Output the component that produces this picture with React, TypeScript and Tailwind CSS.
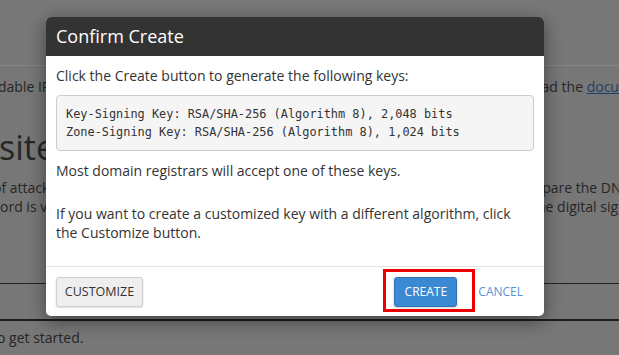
import React from 'react';

const sans = { fontFamily: '"Open Sans", "Liberation Sans", sans-serif' };

function Backdrop() {
  return (
    <div className="h-[355px] w-[619px] overflow-hidden bg-[#777777] text-[14px] text-[#262626]" style={sans}>
      <div className="h-[66px] border-b border-[#858585]" />
      <div className="flex h-[40px] items-center whitespace-nowrap">
        <span className="ml-[-2px] w-[530px] shrink-0">dable IPs in this zone</span>
        <span className="shrink-0">
          read the <span className="text-[#1f3f66] underline">documentation</span>
        </span>
      </div>
      <div className="mt-[18px] flex h-[46px] items-center whitespace-nowrap text-[34px] leading-none">
        <span className="ml-[-1px]">site</span>
      </div>
      <div className="mt-[8px] flex flex-col whitespace-nowrap leading-[19px]">
        <div className="flex">
          <span className="ml-[-7px] w-[527px] shrink-0">of attack</span>
          <span className="shrink-0">prepare the DNS</span>
        </div>
        <div className="flex">
          <span className="w-[532px] shrink-0">ord is valid</span>
          <span className="shrink-0">the digital signature</span>
        </div>
      </div>
      <div className="mt-[67px] border-b border-[#222222]" />
      <div className="mt-[35px] border-b-2 border-[#1c1c1c]" />
      <div className="mt-[7px] whitespace-nowrap leading-[20px]">
        <span className="ml-[-3px]">o get started.</span>
      </div>
    </div>
  );
}

function ConfirmCreate() {
  return (
    <div
      className="absolute left-[46px] top-[17px] w-[498px] overflow-hidden rounded-[5px] bg-white text-[14px] text-[#333333] shadow-[0_5px_18px_rgba(0,0,0,0.45)]"
      style={sans}
    >
      <div className="flex h-[39px] items-center bg-[#333333] px-[10px] text-[18px] text-white">Confirm Create</div>
      <div className="px-[10px] pb-[24px] pt-[10px] leading-[20px]">
        <p>Click the Create button to generate the following keys:</p>
        <pre
          className="mt-[9px] rounded-[4px] border border-[#cccccc] bg-[#f5f5f5] px-[9px] py-[9px] text-[11.9px] leading-[18px] text-[#333333]"
          style={{ fontFamily: '"DejaVu Sans Mono", "Liberation Mono", monospace' }}
        >
          {'Key-Signing Key: RSA/SHA-256 (Algorithm 8), 2,048 bits\nZone-Signing Key: RSA/SHA-256 (Algorithm 8), 1,024 bits'}
        </pre>
        <p className="mt-[10px]">Most domain registrars will accept one of these keys.</p>
        <p className="mt-[23px] leading-[19px]">
          If you want to create a customized key with a different algorithm, click the Customize button.
        </p>
      </div>
      <div className="flex items-center justify-between border-t border-[#e5e5e5] px-[10px] pb-[9px] pt-[10px]">
        <button className="h-[30px] w-[87px] rounded-[3px] border border-[#cfcfcf] bg-[#eeeeee] text-[12.5px] text-[#333333] shadow-[0_1px_2px_rgba(0,0,0,0.15)]">
          CUSTOMIZE
        </button>
        <div className="flex items-center">
          <div className="relative">
            <button className="h-[30px] w-[63px] rounded-[3px] border border-[#2f73b5] bg-[#3b89d3] text-[12px] text-white shadow-[0_1px_3px_rgba(0,0,0,0.2)]">
              CREATE
            </button>
            <span className="pointer-events-none absolute bottom-[-5px] left-[-11px] right-[-18px] top-[-8px] border-[3px] border-[#ee0000]" />
          </div>
          <a className="ml-[21px] mr-[11px] text-[12px] text-[#5b92d4]">CANCEL</a>
        </div>
      </div>
    </div>
  );
}

export default function App() {
  return (
    <div className="relative h-[355px] w-[619px] overflow-hidden">
      <Backdrop />
      <ConfirmCreate />
    </div>
  );
}
